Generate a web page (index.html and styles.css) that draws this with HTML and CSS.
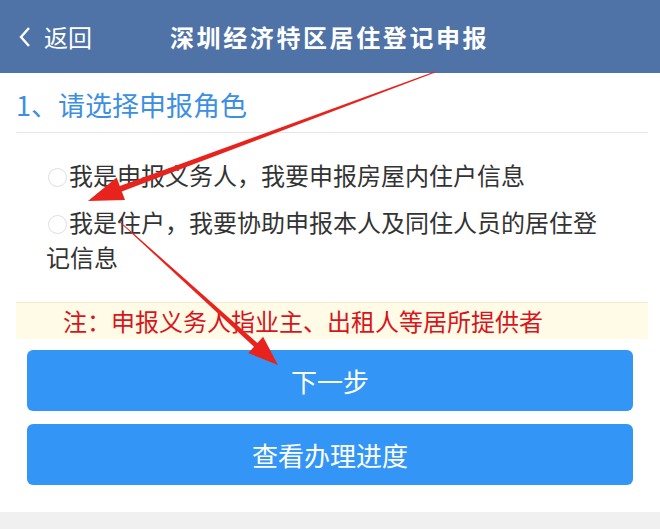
FILE: index.html
```html
<!DOCTYPE html>
<html lang="zh-CN">
<head>
    <meta charset="UTF-8">
    <meta name="viewport" content="width=device-width, initial-scale=1.0">
    <title>深圳经济特区居住登记申报</title>
    <link rel="stylesheet" href="styles.css">
</head>
<body>
    <div class="page">
        <header class="topbar">
            <a class="back" href="#">
                <svg class="back-icon" width="14" height="22" viewBox="0 0 14 22">
                    <polyline points="11,2 3,11 11,20" fill="none" stroke="#fff" stroke-width="2.4"/>
                </svg>
                <span>返回</span>
            </a>
            <h1 class="title">深圳经济特区居住登记申报</h1>
        </header>

        <section class="block">
            <h2 class="block-title">1、请选择申报角色</h2>
            <div class="options">
                <label class="option"><input type="radio" name="role" class="radio">我是申报义务人，我要申报房屋内住户信息</label>
                <label class="option"><input type="radio" name="role" class="radio">我是住户，我要协助申报本人及同住人员的居住登记信息</label>
            </div>
            <div class="note">注：申报义务人指业主、出租人等居所提供者</div>
            <div class="actions">
                <button type="button" class="btn">下一步</button>
                <button type="button" class="btn">查看办理进度</button>
            </div>
        </section>

        <svg class="marks" width="660" height="529" viewBox="0 0 660 529">
            <polygon fill="#e8231d" points="434.8,71.5 435.2,72.5 121.8,191.6 125,200 88,201 116.6,177.5 119.8,186"/>
            <polygon fill="#e8231d" points="119.7,222.3 120.3,221.7 257.4,343 263.1,336.7 278,365 248.3,353.1 254,346.8"/>
        </svg>
    </div>
</body>
</html>
```

FILE: styles.css
```css
body {
  margin: 0;
  padding: 0;
  background-color: #f0f0f0;
  font-family: "Noto Sans CJK SC", "Noto Sans", sans-serif;
}

.page {
  position: relative;
  width: 660px;
  height: 529px;
  overflow: hidden;
}

.topbar {
  height: 73px;
  background-color: #4f73a7;
  display: flex;
  align-items: center;
  color: #fff;
}

.back {
  display: flex;
  align-items: center;
  gap: 12px;
  padding-left: 18px;
  color: #fff;
  text-decoration: none;
  font-size: 24px;
  width: 152px;
}

.title {
  margin: 0;
  font-size: 24px;
  font-weight: bold;
  letter-spacing: 2.6px;
}

.block {
  background-color: #fff;
  padding: 14px 12px 27px 16px;
}

.block-title {
  margin: 0;
  font-size: 27px;
  font-weight: normal;
  color: #3d8fe3;
  line-height: 36px;
  padding-bottom: 9px;
  border-bottom: 1px solid #e6e6e6;
}

.options {
  padding: 24px 40px 16px 30px;
}

.option {
  display: block;
  font-size: 24px;
  line-height: 35px;
  color: #333;
  margin-bottom: 12px;
}

.radio {
  appearance: none;
  width: 19px;
  height: 19px;
  margin: 0 2px 0 2px;
  border: 1px solid #dedede;
  border-radius: 50%;
  vertical-align: -2px;
}

.note {
  background-color: #fffbe6;
  border-top: 1px solid #f3ead0;
  color: #d8151c;
  font-size: 24px;
  line-height: 36px;
  padding-left: 47px;
}

.actions {
  display: flex;
  flex-direction: column;
  gap: 13px;
  padding: 11px 15px 0 11px;
}

.btn {
  height: 61px;
  background-color: #3396f7;
  color: #fff;
  border: none;
  border-radius: 6px;
  font-family: inherit;
  font-size: 26px;
  cursor: pointer;
}

.marks {
  position: absolute;
  left: 0;
  top: 0;
  pointer-events: none;
}
```
